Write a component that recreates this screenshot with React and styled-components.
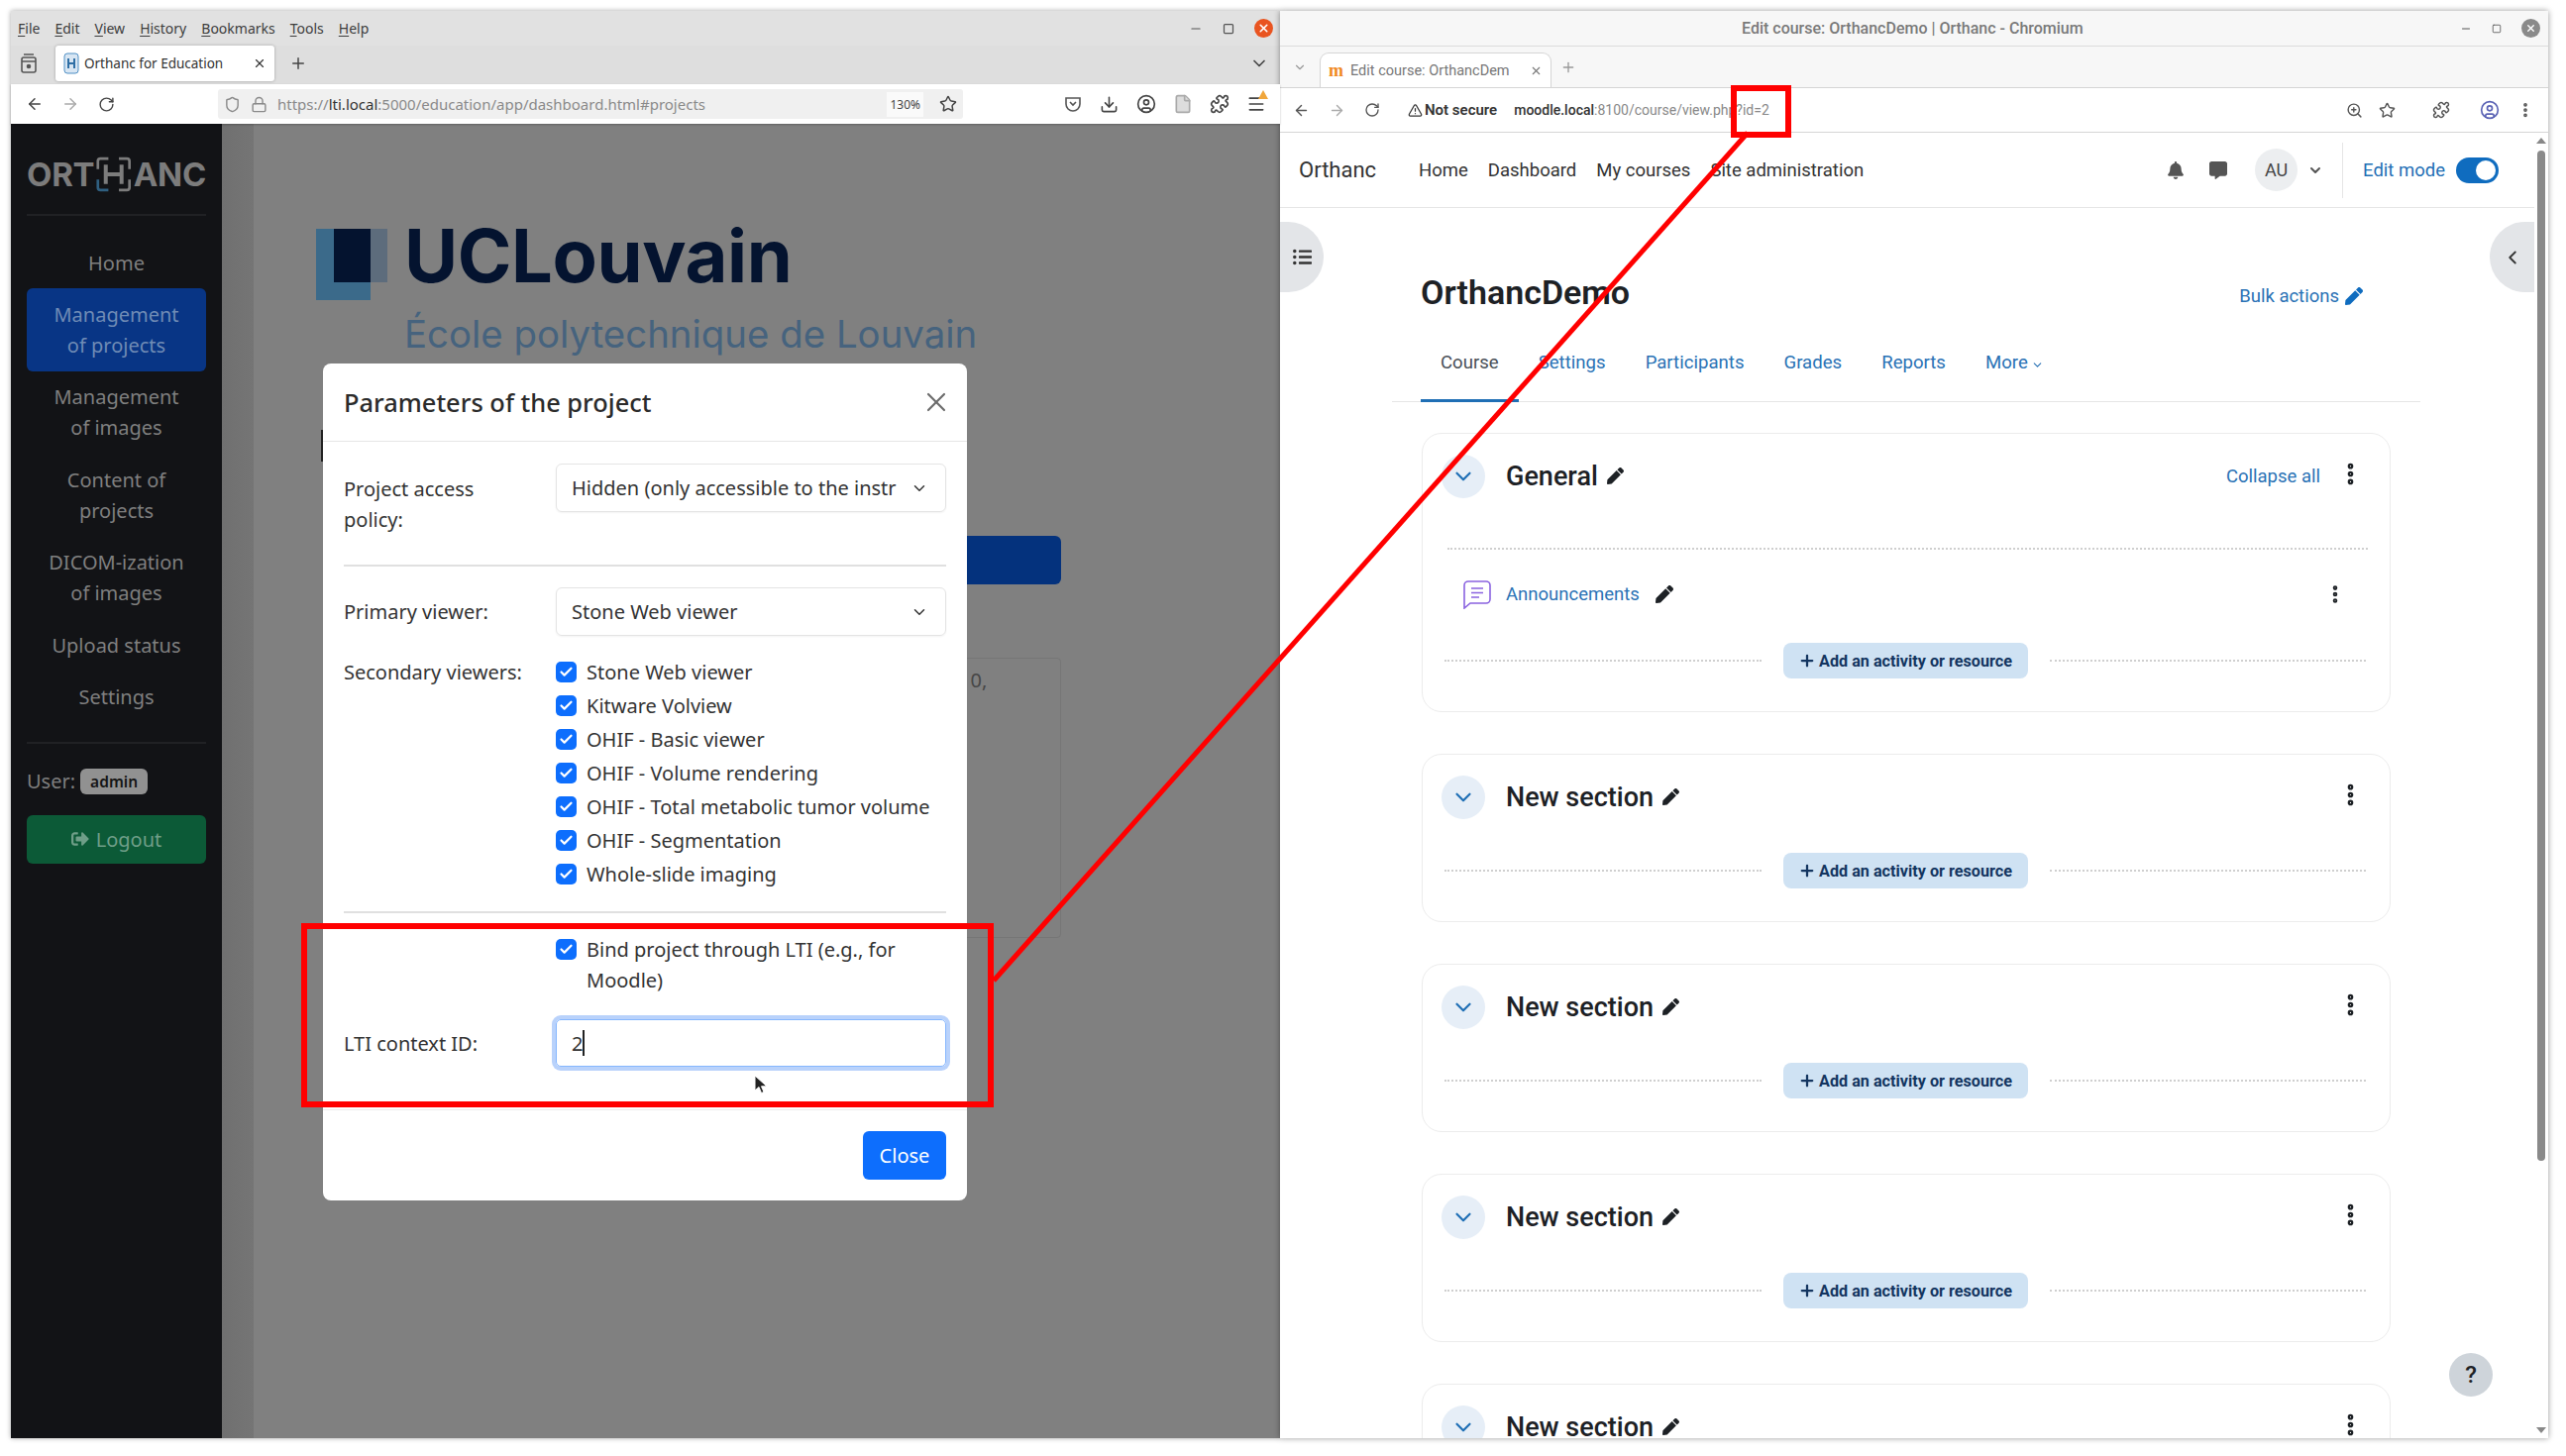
import React from "react";
import styled, { createGlobalStyle } from "styled-components";
import {
  ArrowLeft,
  ArrowRight,
  RotateCw,
  Shield,
  Lock,
  Star,
  Download,
  CircleUser,
  File,
  Puzzle,
  Menu,
  Plus,
  X,
  ChevronDown,
  ChevronLeft,
  Minus,
  Square,
  ZoomIn,
  TriangleAlert,
  EllipsisVertical,
  Check,
} from "lucide-react";
import { FaPen, FaBell, FaCommentAlt, FaListUl, FaSignOutAlt } from "react-icons/fa";

const UI = '"Noto Sans", "Open Sans", sans-serif';
const MOODLE = 'Roboto, "Liberation Sans", sans-serif';

const GlobalStyle = createGlobalStyle`
  html, body {
    margin: 0;
    padding: 0;
    background: #fff;
  }
  * {
    box-sizing: border-box;
  }
`;

const Page = styled.div`
  position: relative;
  width: 2590px;
  height: 1470px;
  padding: 11px 18px 18px 11px;
  display: flex;
  overflow: hidden;
  background: #fff;
`;

/* left window: firefox */
const LeftWindow = styled.div`
  width: 1281px;
  display: flex;
  flex-direction: column;
  position: relative;
  box-shadow: 0 0 5px rgba(0, 0, 0, 0.35);
  font-family: ${UI};
`;

const MenuBar = styled.div`
  height: 35px;
  background: #e1e1e1;
  display: flex;
  align-items: center;
  padding: 0 7px;
  gap: 15px;
  font-size: 14px;
  color: #3d3d3d;
`;

const MenuItem = styled.span`
  u {
    text-underline-offset: 2px;
  }
`;

const WindowButtons = styled.div`
  margin-left: auto;
  display: flex;
  align-items: center;
  gap: 20px;
  color: #555;
`;

const CloseDot = styled.span`
  width: 19px;
  height: 19px;
  border-radius: 50%;
  background: ${(p) => p.$bg};
  color: #fff;
  display: flex;
  align-items: center;
  justify-content: center;
`;

const FoxTabBar = styled.div`
  height: 39px;
  background: #dedede;
  display: flex;
  align-items: center;
  padding: 0 11px 4px 9px;
  color: #444;
`;

const FoxTab = styled.div`
  width: 221px;
  height: 36px;
  flex: none;
  margin: 0 15px 0 18px;
  background: #fff;
  border-radius: 3px;
  box-shadow: 0 0 3px rgba(0, 0, 0, 0.3);
  display: flex;
  align-items: center;
  padding: 0 8px;
  gap: 5px;
  font-size: 13.5px;
  color: #333;
  svg:last-child {
    margin-left: auto;
  }
`;

const TabListButton = styled.span`
  margin-left: auto;
  display: flex;
`;

const FoxToolbar = styled.div`
  height: 40px;
  background: #fff;
  display: flex;
  align-items: center;
  padding: 0 6px;
  color: #444;
  box-shadow: 0 1px 2px rgba(0, 0, 0, 0.25);
  z-index: 1;
`;

const ToolIcon = styled.span`
  width: ${(p) => p.$w || 36}px;
  display: flex;
  justify-content: center;
  align-items: center;
  position: relative;
  color: ${(p) => p.$color || "inherit"};
`;

const NoticeDot = styled.span`
  position: absolute;
  top: -4px;
  right: 6px;
  width: 0;
  height: 0;
  border-left: 5px solid transparent;
  border-right: 5px solid transparent;
  border-bottom: 9px solid #f0a63b;
`;

const FoxUrlBar = styled.div`
  width: 752px;
  height: 30px;
  margin-left: 95px;
  background: #f0f0f0;
  border-radius: 3px;
  display: flex;
  align-items: center;
  padding: 0 6px;
  font-size: 15px;
  color: #8a8a8a;
  gap: 10px;
  b {
    font-weight: 400;
    color: #333;
  }
`;

const UrlText = styled.span`
  flex: 1;
  white-space: nowrap;
`;

const ZoomBadge = styled.span`
  background: #fafafa;
  font-size: 12px;
  color: #444;
  padding: 4px 3px;
  margin-right: 6px;
`;

const FoxTools = styled.div`
  margin-left: auto;
  display: flex;
`;

const AppBody = styled.div`
  flex: 1;
  display: flex;
  position: relative;
  min-height: 0;
`;

const Sidebar = styled.nav`
  width: 213px;
  background: #121316;
  padding: 31px 16px 0;
  display: flex;
  flex-direction: column;
  font-size: 20px;
  line-height: 31px;
  color: #7f7f7f;
  text-align: center;
`;

const Logo = styled.div`
  height: 40px;
  display: flex;
  align-items: center;
  justify-content: center;
  font-family: Inter, sans-serif;
  font-weight: 700;
  font-size: 33px;
  color: #7c7c7c;
  letter-spacing: -0.3px;
  svg {
    margin: 0 2px;
  }
`;

const Rule = styled.hr`
  width: 100%;
  height: 2px;
  border: 0;
  background: #202124;
  margin: ${(p) => p.$m};
`;

const NavItem = styled.a`
  display: block;
  padding: 10.7px 0;
  border-radius: 6px;
  color: ${(p) => (p.$active ? "#6f8bb5" : "#7f7f7f")};
  background: ${(p) => (p.$active ? "#083585" : "transparent")};
`;

const UserLine = styled.div`
  display: flex;
  align-items: center;
  gap: 5px;
  height: 26px;
`;

const UserBadge = styled.span`
  background: #919191;
  color: #151515;
  font-size: 15.5px;
  font-weight: 600;
  line-height: 26px;
  padding: 0 10px;
  border-radius: 6px;
`;

const LogoutButton = styled.div`
  margin-top: 21px;
  height: 49px;
  border-radius: 6px;
  background: #0c5a37;
  color: #6f9e88;
  display: flex;
  align-items: center;
  justify-content: center;
  gap: 7px;
`;

const Strip = styled.div`
  width: 32px;
  background: linear-gradient(90deg, #707070, #757575);
`;

const Main = styled.main`
  flex: 1;
  background: #808080;
  padding: 106px 221px 0 63px;
  position: relative;
  overflow: hidden;
`;

const Brand = styled.div`
  display: flex;
  gap: 17px;
`;

const BrandMark = styled.svg`
  flex: none;
`;

const BrandText = styled.div`
  display: flex;
  flex-direction: column;
  font-family: Inter, sans-serif;
`;

const BrandName = styled.div`
  font-size: 74px;
  line-height: 72px;
  font-weight: 650;
  color: #04132f;
  letter-spacing: -0.4px;
  margin-top: -9px;
`;

const BrandSub = styled.div`
  font-size: 38.4px;
  line-height: 48px;
  color: #46637e;
  margin-top: 19px;
  white-space: nowrap;
`;

const HiddenButton = styled.div`
  height: 49px;
  margin: 180px 0 0 11px;
  background: #04327d;
  border-radius: 6px;
`;

const HiddenCard = styled.div`
  height: 283px;
  margin: 74px 0 0 11px;
  border: 1px solid #767676;
  border-radius: 4px;
  padding: 8px 0 0 638px;
  font-size: 20px;
  color: #474747;
`;

const HeadingPeek = styled.span`
  position: absolute;
  left: 68px;
  top: 309px;
  width: 3px;
  height: 32px;
  background: #222;
`;

const Modal = styled.section`
  position: absolute;
  left: 315px;
  top: 356px;
  width: 650px;
  height: 845px;
  background: #fff;
  border-radius: 8px;
  color: #333;
  font-size: 20px;
  line-height: 31px;
  display: flex;
  flex-direction: column;
`;

const ModalHeader = styled.header`
  height: 79px;
  flex: none;
  padding: 0 15px 0 21px;
  display: flex;
  align-items: center;
  justify-content: space-between;
  border-bottom: 1px solid #e6e6e6;
  color: #6c6c6c;
`;

const ModalTitle = styled.h2`
  margin: 0;
  font-size: 25.4px;
  font-weight: 500;
  color: #2b2b2b;
`;

const ModalBody = styled.div`
  flex: 1;
  padding: 22px 21px 0;
`;

const FormRow = styled.div`
  display: grid;
  grid-template-columns: 214px 1fr;
  margin-bottom: ${(p) => p.$mb || 0}px;
`;

const FieldLabel = styled.label`
  padding-top: ${(p) => p.$pt || 0}px;
`;

const SelectBox = styled.div`
  height: 49px;
  border: 1px solid #e4e4e4;
  border-radius: 6px;
  padding: 0 17px 0 15px;
  display: flex;
  align-items: center;
  justify-content: space-between;
  box-shadow: 0 1px 2px rgba(0, 0, 0, 0.05);
`;

const SelectValue = styled.span`
  white-space: nowrap;
`;

const FormRule = styled.hr`
  height: 2px;
  border: 0;
  background: #e0e0e0;
  margin: ${(p) => p.$m};
`;

const CheckList = styled.div`
  display: flex;
  flex-direction: column;
  gap: 3px;
`;

const CheckRow = styled.div`
  display: flex;
  gap: 10px;
  align-items: flex-start;
`;

const CheckMark = styled.span`
  flex: none;
  width: 21px;
  height: 21px;
  margin-top: 5px;
  border-radius: 5px;
  background: #0d6efd;
  color: #fff;
  display: flex;
  align-items: center;
  justify-content: center;
`;

const ContextInput = styled.div`
  height: 48px;
  border-radius: 5px;
  border: 1px solid #86b7fe;
  box-shadow: 0 0 0 4px #b9d2fb;
  padding-left: 15px;
  display: flex;
  align-items: center;
`;

const Caret = styled.span`
  width: 2px;
  height: 26px;
  background: #222;
`;

const ModalFooter = styled.footer`
  flex: none;
  height: 92px;
  border-top: 1px solid #ededed;
  padding: 21px 21px 0;
  display: flex;
  justify-content: flex-end;
`;

const CloseButton = styled.button`
  width: 84px;
  height: 49px;
  border: 0;
  border-radius: 6px;
  background: #0d6efd;
  color: #fff;
  font: inherit;
`;

const Pointer = styled.svg`
  position: absolute;
  left: 761px;
  top: 1085px;
`;

/* right window: chromium with moodle */
const RightWindow = styled.div`
  width: 1280px;
  display: flex;
  flex-direction: column;
  position: relative;
  box-shadow: 0 0 6px rgba(0, 0, 0, 0.4);
  font-family: ${MOODLE};
  background: #fff;
`;

const TitleBar = styled.div`
  height: 36px;
  background: #f7f7f7;
  border-bottom: 1px solid #dcdcdc;
  display: flex;
  align-items: center;
  padding: 0 8px 0 466px;
  font-size: 16px;
  font-weight: 500;
  color: #7a7a7a;
  white-space: nowrap;
`;

const ChromeTabs = styled.div`
  height: 41px;
  background: #f7f7f7;
  display: flex;
  align-items: flex-end;
  padding-left: 13px;
  color: #777;
`;

const ChromeTab = styled.div`
  width: 234px;
  height: 35px;
  margin: 0 9px 0 13px;
  padding: 0 8px;
  background: #fff;
  border: 1px solid #d5d5d5;
  border-bottom: 0;
  border-radius: 9px 9px 0 0;
  display: flex;
  align-items: center;
  gap: 7px;
  font-size: 14.5px;
  color: #777;
  white-space: nowrap;
`;

const Favicon = styled.span`
  font-family: "Liberation Serif", serif;
  font-weight: 700;
  font-size: 18px;
  color: #f08a24;
`;

const TabTitle = styled.span`
  flex: 1;
`;

const PlusSlot = styled.span`
  align-self: center;
  display: flex;
  color: #999;
`;

const ChromeToolbar = styled.div`
  height: 46px;
  flex: none;
  background: #fff;
  border-top: 1px solid #d5d5d5;
  border-bottom: 1px solid #d5d5d5;
  display: flex;
  align-items: center;
  padding: 0 4px 0 3px;
  color: #555;
  font-size: 14px;
`;

const NotSecure = styled.span`
  display: flex;
  align-items: center;
  gap: 2px;
  margin-left: 18px;
  font-size: 15px;
  font-weight: 600;
  color: #333;
`;

const ChromeUrl = styled.span`
  margin-left: 17px;
  color: #888;
  flex: 1;
  b {
    color: #333;
    font-weight: 500;
  }
`;

const Viewport = styled.div`
  flex: 1;
  display: flex;
  min-height: 0;
  position: relative;
`;

const Scroller = styled.div`
  flex: 1;
  min-width: 0;
  overflow: hidden;
  color: #1d2125;
`;

const Scrollbar = styled.div`
  width: 14px;
  flex: none;
  background: #fff;
  position: relative;
  display: flex;
  justify-content: center;
  padding-top: 18px;
`;

const ScrollThumb = styled.div`
  width: 8px;
  height: 1020px;
  border-radius: 4px;
  background: #8a8a8a;
`;

const ScrollArrow = styled.span`
  position: absolute;
  left: 2px;
  ${(p) => (p.$up ? "top: 5px;" : "bottom: 5px;")}
  border-left: 5px solid transparent;
  border-right: 5px solid transparent;
  ${(p) => (p.$up ? "border-bottom: 6px solid #888;" : "border-top: 6px solid #888;")}
`;

const NavBar = styled.header`
  height: 76px;
  display: flex;
  align-items: center;
  border-bottom: 1px solid #e6e6e6;
  padding-left: 19px;
  font-size: 18.5px;
  color: #333;
`;

const SiteName = styled.span`
  font-size: 22px;
  width: 121px;
`;

const NavLinks = styled.div`
  display: flex;
  gap: 20px;
`;

const NavRight = styled.div`
  margin-left: auto;
  display: flex;
  align-items: center;
  color: #555;
  padding-right: 36px;
`;

const Avatar = styled.span`
  width: 43px;
  height: 43px;
  margin: 0 10px 0 3px;
  border-radius: 50%;
  background: #eceef0;
  display: flex;
  align-items: center;
  justify-content: center;
  font-size: 18px;
  color: #444;
`;

const EditMode = styled.div`
  margin-left: 19px;
  padding-left: 20px;
  height: 56px;
  border-left: 1px solid #e6e6e6;
  display: flex;
  align-items: center;
  gap: 11px;
  color: #1f6fb5;
`;

const Toggle = styled.span`
  width: 43px;
  height: 26px;
  padding: 3px;
  border-radius: 13px;
  background: #0f6cbf;
  display: flex;
  justify-content: flex-end;
  &::after {
    content: "";
    width: 20px;
    height: 20px;
    border-radius: 50%;
    background: #fff;
  }
`;

const DrawerToggle = styled.div`
  position: absolute;
  top: 90px;
  ${(p) => (p.$side === "left" ? "left: 0;" : "right: 14px;")}
  width: ${(p) => (p.$side === "left" ? 44 : 45)}px;
  height: 71px;
  background: #e3e5e8;
  border-radius: ${(p) => (p.$side === "left" ? "0 36px 36px 0" : "36px 0 0 36px")};
  display: flex;
  align-items: center;
  justify-content: center;
  color: #333;
`;

const Course = styled.div`
  padding-left: 113px;
`;

const CourseHead = styled.div`
  width: 980px;
  margin: 65px 0 0 29px;
  height: 40px;
  display: flex;
  align-items: center;
`;

const CourseTitle = styled.h1`
  margin: 0;
  font-size: 34px;
  font-weight: 600;
`;

const BlueLink = styled.a`
  color: #2a72b5;
  font-size: ${(p) => p.$size || 18.5}px;
`;

const BulkActions = styled.div`
  margin-left: auto;
  display: flex;
  align-items: center;
  gap: 6px;
  color: #0f6cbf;
  padding-top: 7px;
  padding-right: 29px;
`;

const CourseTabs = styled.div`
  width: 1038px;
  margin-top: 40px;
  height: 51px;
  padding-left: 29px;
  display: flex;
  border-bottom: 1px solid #e6e6e6;
`;

const CourseTab = styled.a`
  padding: 0 20px;
  height: 51px;
  display: flex;
  align-items: flex-start;
  gap: 3px;
  font-size: 18.6px;
  color: ${(p) => (p.$active ? "#495057" : "#2a72b5")};
  border-bottom: 3px solid ${(p) => (p.$active ? "#1f6fb5" : "transparent")};
  svg {
    margin-top: 7px;
  }
`;

const Sections = styled.div`
  width: 978px;
  margin: 31px 0 0 30px;
  display: flex;
  flex-direction: column;
  gap: 42px;
`;

const SectionCard = styled.section`
  border: 1px solid #ececec;
  border-radius: 20px;
  padding: 20px 22px 33px 19px;
`;

const SectionHead = styled.div`
  height: 45px;
  display: flex;
  align-items: center;
`;

const Collapser = styled.span`
  width: 44px;
  height: 44px;
  flex: none;
  border-radius: 50%;
  background: #e6eef7;
  color: #1f6fb5;
  display: flex;
  align-items: center;
  justify-content: center;
  margin-right: 21px;
`;

const SectionTitle = styled.h3`
  margin: 0 9px 0 0;
  font-size: 27px;
  font-weight: 500;
`;

const HeadRight = styled.div`
  margin-left: auto;
  margin-right: 4px;
  display: flex;
  align-items: center;
  gap: 17px;
  color: #1d2125;
  svg {
    margin-top: -5px;
  }
`;

const DottedLine = styled.div`
  border-top: 2px dotted #cfcfcf;
  flex: ${(p) => (p.$full ? "none" : 1)};
  margin: ${(p) => p.$m || 0};
`;

const Activity = styled.div`
  height: 30px;
  margin: 30px 0 34px 21px;
  display: flex;
  align-items: center;
  gap: 14px;
`;

const ActivityPencil = styled.span`
  display: flex;
  margin-left: 2px;
`;

const ActivityMenu = styled.span`
  margin-left: auto;
  margin-right: 22px;
  display: flex;
`;

const AddRow = styled.div`
  display: flex;
  align-items: center;
  gap: 22px;
  margin-top: ${(p) => p.$mt || 0}px;
  padding: 0 2px 0 3px;
`;

const AddButton = styled.div`
  width: 247px;
  height: 36px;
  flex: none;
  border-radius: 8px;
  background: #cfe2f3;
  color: #133560;
  display: flex;
  align-items: center;
  justify-content: center;
  gap: 3px;
  font-size: 16.2px;
  font-weight: 700;
  white-space: nowrap;
`;

const HelpButton = styled.div`
  position: absolute;
  right: 56px;
  bottom: 42px;
  width: 44px;
  height: 44px;
  border-radius: 50%;
  background: #ced4da;
  color: #1d2125;
  display: flex;
  align-items: center;
  justify-content: center;
  font-size: 24px;
  font-weight: 500;
`;

/* red annotations */
const RedBox = styled.div`
  position: absolute;
  left: ${(p) => p.$x}px;
  top: ${(p) => p.$y}px;
  width: ${(p) => p.$w}px;
  height: ${(p) => p.$h}px;
  border: 6px solid #f00;
  pointer-events: none;
`;

const RedLine = styled.svg`
  position: absolute;
  left: 0;
  top: 0;
  pointer-events: none;
`;

const MENU = ["File", "Edit", "View", "History", "Bookmarks", "Tools", "Help"];
const VIEWERS = [
  "Stone Web viewer",
  "Kitware Volview",
  "OHIF - Basic viewer",
  "OHIF - Volume rendering",
  "OHIF - Total metabolic tumor volume",
  "OHIF - Segmentation",
  "Whole-slide imaging",
];
const TABS = ["Settings", "Participants", "Grades", "Reports"];

const Checked = ({ children }) => (
  <CheckRow>
    <CheckMark>
      <Check size={15} strokeWidth={3.5} />
    </CheckMark>
    <span>{children}</span>
  </CheckRow>
);

const Pencil = ({ size = 17 }) => <FaPen size={size} />;

const Dots = () => <EllipsisVertical size={27} strokeWidth={3} />;

const AddActivity = ({ mt }) => (
  <AddRow $mt={mt}>
    <DottedLine />
    <AddButton>
      <Plus size={18} strokeWidth={3} />
      Add an activity or resource
    </AddButton>
    <DottedLine />
  </AddRow>
);

// the last card runs off the bottom of the window, only its head is visible
const NewSection = ({ cut }) => (
  <SectionCard>
    <SectionHead>
      <Collapser>
        <ChevronDown size={26} />
      </Collapser>
      <SectionTitle>New section</SectionTitle>
      <Pencil />
      <HeadRight>
        <Dots />
      </HeadRight>
    </SectionHead>
    {!cut && <AddActivity mt={34} />}
  </SectionCard>
);

const LogoMark = () => (
  <svg width="40" height="40" viewBox="0 0 40 40">
    <path d="M2 14V5a3 3 0 0 1 3-3h9M26 2h9a3 3 0 0 1 3 3v9M38 26v9a3 3 0 0 1-3 3h-9" fill="none" stroke="#7c7c7c" strokeWidth="3" />
    <path d="M14 38H5a3 3 0 0 1-3-3v-9" fill="none" stroke="#2f5f80" strokeWidth="3" />
    <path d="M11 9v22M29 9v22M11 20h18" fill="none" stroke="#7c7c7c" strokeWidth="4.5" />
  </svg>
);

const PocketIcon = () => (
  <svg width="18" height="18" viewBox="0 0 18 18" fill="none" stroke="#555" strokeWidth="1.6">
    <path d="M2 3h14v6a7 7 0 0 1-14 0z" />
    <path d="M6 7l3 3 3-3" />
  </svg>
);

const FoxViewIcon = () => (
  <svg width="18" height="22" viewBox="0 0 18 22" fill="none" stroke="#555" strokeWidth="1.6">
    <rect x="2" y="5" width="14" height="15" rx="2" />
    <path d="M4 2h10M2 9h14" />
    <circle cx="9" cy="14" r="1.5" fill="#555" />
  </svg>
);

const ForumIcon = () => (
  <svg width="30" height="30" viewBox="0 0 30 30" fill="none" stroke="#8a63e0" strokeWidth="1.6">
    <path d="M6 2h18a4 4 0 0 1 4 4v14a4 4 0 0 1-4 4H8l-6 5V6a4 4 0 0 1 4-4z" />
    <path d="M9 9h12M9 13.5h12M9 18h8" />
  </svg>
);

const App = () => {
  return (
    <Page>
      <GlobalStyle />
      <LeftWindow>
        <MenuBar>
          {MENU.map((m) => (
            <MenuItem key={m}>
              <u>{m[0]}</u>
              {m.slice(1)}
            </MenuItem>
          ))}
          <WindowButtons>
            <Minus size={14} />
            <Square size={12} strokeWidth={2.5} />
            <CloseDot $bg="#e95420">
              <X size={13} strokeWidth={3} />
            </CloseDot>
          </WindowButtons>
        </MenuBar>
        <FoxTabBar>
          <FoxViewIcon />
          <FoxTab>
            <svg width="16" height="22" viewBox="0 0 16 22">
              <rect x="1" y="1" width="14" height="20" rx="3" fill="#d8e6f3" stroke="#4f8fc4" />
              <path d="M5 6v10M11 6v10M5 11h6" stroke="#2f6fa5" strokeWidth="2" />
            </svg>
            Orthanc for Education
            <X size={14} />
          </FoxTab>
          <Plus size={18} />
          <TabListButton>
            <ChevronDown size={20} />
          </TabListButton>
        </FoxTabBar>
        <FoxToolbar>
          <ToolIcon>
            <ArrowLeft size={18} />
          </ToolIcon>
          <ToolIcon $color="#aaa">
            <ArrowRight size={18} />
          </ToolIcon>
          <ToolIcon>
            <RotateCw size={17} />
          </ToolIcon>
          <FoxUrlBar>
            <Shield size={17} />
            <Lock size={17} />
            <UrlText>
              https://<b>lti.local</b>:5000/education/app/dashboard.html#projects
            </UrlText>
            <ZoomBadge>130%</ZoomBadge>
            <Star size={18} color="#444" />
          </FoxUrlBar>
          <FoxTools>
            <ToolIcon $w={37}>
              <PocketIcon />
            </ToolIcon>
            <ToolIcon $w={37}>
              <Download size={19} />
            </ToolIcon>
            <ToolIcon $w={37}>
              <CircleUser size={20} />
            </ToolIcon>
            <ToolIcon $w={37} $color="#aaa">
              <File size={20} fill="#ddd" />
            </ToolIcon>
            <ToolIcon $w={37}>
              <Puzzle size={20} />
            </ToolIcon>
            <ToolIcon $w={37}>
              <Menu size={20} />
              <NoticeDot />
            </ToolIcon>
          </FoxTools>
        </FoxToolbar>
        <AppBody>
          <Sidebar>
            <Logo>
              ORT
              <LogoMark />
              ANC
            </Logo>
            <Rule $m="20px 0 21px" />
            <NavItem>Home</NavItem>
            <NavItem $active>
              Management
              <br />
              of projects
            </NavItem>
            <NavItem>
              Management
              <br />
              of images
            </NavItem>
            <NavItem>
              Content of
              <br />
              projects
            </NavItem>
            <NavItem>
              DICOM-ization
              <br />
              of images
            </NavItem>
            <NavItem>Upload status</NavItem>
            <NavItem>Settings</NavItem>
            <Rule $m="19px 0 25px" />
            <UserLine>
              User:
              <UserBadge>admin</UserBadge>
            </UserLine>
            <LogoutButton>
              <FaSignOutAlt size={18} />
              Logout
            </LogoutButton>
          </Sidebar>
          <Strip />
          <Main>
            <Brand>
              <BrandMark width="72" height="72" viewBox="0 0 72 72">
                <rect x="0" y="0" width="55" height="72" fill="#3b6a8a" />
                <rect x="55" y="0" width="17" height="54" fill="#5d6c7c" />
                <rect x="18" y="0" width="37" height="54" fill="#04132f" />
              </BrandMark>
              <BrandText>
                <BrandName>UCLouvain</BrandName>
                <BrandSub>École polytechnique de Louvain</BrandSub>
              </BrandText>
            </Brand>
            <HiddenButton />
            <HiddenCard>: 0,</HiddenCard>
            <HeadingPeek />
          </Main>
        </AppBody>
        <Modal>
          <ModalHeader>
            <ModalTitle>Parameters of the project</ModalTitle>
            <X size={32} strokeWidth={1.6} />
          </ModalHeader>
          <ModalBody>
            <FormRow>
              <FieldLabel $pt={10}>
                Project access
                <br />
                policy:
              </FieldLabel>
              <SelectBox>
                <SelectValue>Hidden (only accessible to the instr</SelectValue>
                <ChevronDown size={18} />
              </SelectBox>
            </FormRow>
            <FormRule $m="30px 0 21px" />
            <FormRow $mb={21}>
              <FieldLabel $pt={9}>Primary viewer:</FieldLabel>
              <SelectBox>
                <SelectValue>Stone Web viewer</SelectValue>
                <ChevronDown size={18} />
              </SelectBox>
            </FormRow>
            <FormRow>
              <FieldLabel>Secondary viewers:</FieldLabel>
              <CheckList>
                {VIEWERS.map((v) => (
                  <Checked key={v}>{v}</Checked>
                ))}
              </CheckList>
            </FormRow>
            <FormRule $m="22px 0 21px" />
            <FormRow $mb={24}>
              <span />
              <Checked>Bind project through LTI (e.g., for Moodle)</Checked>
            </FormRow>
            <FormRow>
              <FieldLabel $pt={9}>LTI context ID:</FieldLabel>
              <ContextInput>
                2<Caret />
              </ContextInput>
            </FormRow>
          </ModalBody>
          <ModalFooter>
            <CloseButton>Close</CloseButton>
          </ModalFooter>
        </Modal>
      </LeftWindow>

      <RightWindow>
        <TitleBar>
          Edit course: OrthancDemo | Orthanc - Chromium
          <WindowButtons>
            <Minus size={12} />
            <Square size={10} />
            <CloseDot $bg="#8a8a8a">
              <X size={11} strokeWidth={3} />
            </CloseDot>
          </WindowButtons>
        </TitleBar>
        <ChromeTabs>
          <PlusSlot>
            <ChevronDown size={14} />
          </PlusSlot>
          <ChromeTab>
            <Favicon>m</Favicon>
            <TabTitle>Edit course: OrthancDem</TabTitle>
            <X size={13} />
          </ChromeTab>
          <PlusSlot>
            <Plus size={16} />
          </PlusSlot>
        </ChromeTabs>
        <ChromeToolbar>
          <ToolIcon>
            <ArrowLeft size={17} />
          </ToolIcon>
          <ToolIcon $color="#aaa">
            <ArrowRight size={17} />
          </ToolIcon>
          <ToolIcon>
            <RotateCw size={16} />
          </ToolIcon>
          <NotSecure>
            <TriangleAlert size={15} />
            Not secure
          </NotSecure>
          <ChromeUrl>
            <b>moodle.local</b>:8100/course/view.php?id=2
          </ChromeUrl>
          <ToolIcon $w={20}>
            <ZoomIn size={17} />
          </ToolIcon>
          <ToolIcon $w={46}>
            <Star size={17} />
          </ToolIcon>
          <ToolIcon $w={64}>
            <Puzzle size={18} />
          </ToolIcon>
          <ToolIcon $w={34} $color="#5b63b5">
            <CircleUser size={20} />
          </ToolIcon>
          <ToolIcon $w={38}>
            <EllipsisVertical size={18} strokeWidth={3} />
          </ToolIcon>
        </ChromeToolbar>
        <Viewport>
          <Scroller>
            <NavBar>
              <SiteName>Orthanc</SiteName>
              <NavLinks>
                <span>Home</span>
                <span>Dashboard</span>
                <span>My courses</span>
                <span>Site administration</span>
              </NavLinks>
              <NavRight>
                <FaBell size={18} />
                <ToolIcon $w={68}>
                  <FaCommentAlt size={18} />
                </ToolIcon>
                <Avatar>AU</Avatar>
                <ChevronDown size={16} strokeWidth={3} />
                <EditMode>
                  Edit mode
                  <Toggle />
                </EditMode>
              </NavRight>
            </NavBar>
            <Course>
              <CourseHead>
                <CourseTitle>OrthancDemo</CourseTitle>
                <BulkActions>
                  <BlueLink>Bulk actions</BlueLink>
                  <Pencil size={18} />
                </BulkActions>
              </CourseHead>
              <CourseTabs>
                <CourseTab $active>Course</CourseTab>
                {TABS.map((t) => (
                  <CourseTab key={t}>{t}</CourseTab>
                ))}
                <CourseTab>
                  More
                  <ChevronDown size={13} />
                </CourseTab>
              </CourseTabs>
              <Sections>
                <SectionCard>
                  <SectionHead>
                    <Collapser>
                      <ChevronDown size={26} />
                    </Collapser>
                    <SectionTitle>General</SectionTitle>
                    <Pencil />
                    <HeadRight>
                      <BlueLink>Collapse all</BlueLink>
                      <Dots />
                    </HeadRight>
                  </SectionHead>
                  <DottedLine $full $m="50px 0 0 6px" />
                  <Activity>
                    <ForumIcon />
                    <BlueLink>Announcements</BlueLink>
                    <ActivityPencil>
                      <Pencil size={18} />
                    </ActivityPencil>
                    <ActivityMenu>
                      <EllipsisVertical size={22} strokeWidth={3} />
                    </ActivityMenu>
                  </Activity>
                  <AddActivity />
                </SectionCard>
                <NewSection />
                <NewSection />
                <NewSection />
                <NewSection cut />
              </Sections>
            </Course>
          </Scroller>
          <Scrollbar>
            <ScrollArrow $up />
            <ScrollThumb />
            <ScrollArrow />
          </Scrollbar>
          <DrawerToggle $side="left">
            <FaListUl size={19} />
          </DrawerToggle>
          <DrawerToggle $side="right">
            <ChevronLeft size={22} />
          </DrawerToggle>
          <HelpButton>?</HelpButton>
        </Viewport>
      </RightWindow>

      <Pointer width="14" height="20" viewBox="0 0 14 20">
        <path d="M1 1v15l4-3.5 2.5 6 2.5-1-2.5-5.7H13z" fill="#222" stroke="#fff" strokeWidth="1" />
      </Pointer>
      <RedLine width="2590" height="1470">
        <line x1="1003" y1="990" x2="1764" y2="134" stroke="#f00" strokeWidth="5" />
      </RedLine>
      <RedBox $x={304} $y={932} $w={699} $h={186} />
      <RedBox $x={1747} $y={86} $w={61} $h={53} />
    </Page>
  );
};

export default App;
